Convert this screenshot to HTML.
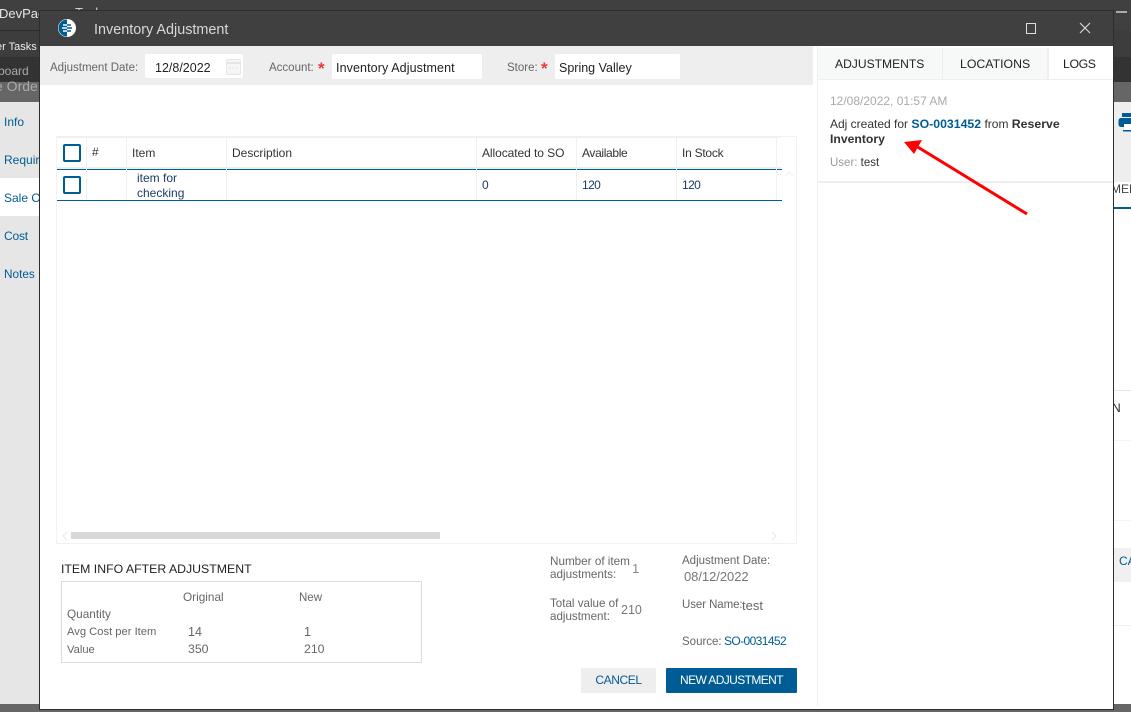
<!DOCTYPE html>
<html><head><meta charset="utf-8"><style>
html,body{margin:0;padding:0;width:1131px;height:712px;overflow:hidden;background:#fff}
body{position:relative;font-family:"Liberation Sans",sans-serif;font-size:12px;color:#444}
.r{position:absolute}
.t{position:absolute;white-space:nowrap;line-height:15px}
.lb{color:#666}
.dk{color:#222}
.nv{color:#1c3c66}
.bl{color:#005c94}
.cb{position:absolute;width:14px;height:14px;border:2px solid #005c94;border-radius:2px;background:#fff}
.st{font-weight:bold;font-size:17px;color:#e8383d}
</style></head><body>
<div class="r" style="left:0;top:0;width:1131px;height:30px;background:#404040"></div>
<div class="r" style="left:0;top:30px;width:1131px;height:27px;background:#3d3d3d"></div>
<div class="r" style="left:0;top:30px;width:40px;height:1px;background:#2c2c2c"></div>
<div class="r" style="left:0;top:57px;width:1131px;height:25px;background:#333"></div>
<div class="r" style="left:0;top:82px;width:1131px;height:20px;background:#666"></div>
<div class="r" style="left:0;top:102px;width:40px;height:602px;background:#e6e6e6"></div>
<div class="r" style="left:0;top:178px;width:40px;height:38px;background:#fff"></div>
<div class="r" style="left:0;top:704px;width:1131px;height:8px;background:#666"></div>
<div class="r" style="left:1113px;top:102px;width:18px;height:80px;background:#eee"></div>
<div class="r" style="left:1113px;top:182px;width:18px;height:522px;background:#fff"></div>
<div class="r" style="left:1113px;top:207px;width:18px;height:2px;background:#005c94"></div>
<div class="r" style="left:1113px;top:390px;width:18px;height:1px;background:#e8e8e8"></div>
<div class="r" style="left:1113px;top:548px;width:18px;height:34px;background:#f0f0f0"></div>
<div class="r" style="left:1113px;top:440px;width:18px;height:1px;background:#f4f4f4"></div>
<div class="r" style="left:1113px;top:520px;width:18px;height:1px;background:#f4f4f4"></div>
<div class="r" style="left:1113px;top:625px;width:18px;height:1px;background:#eee"></div>
<div class="r" style="left:1116px;top:11px;width:11px;height:2px;background:#aaa"></div>
<svg class="r" style="left:1118px;top:112px" width="13" height="20" viewBox="0 0 13 20"><path d="M4 1h9v4H4z" fill="#005c94"/><path d="M3 6h10v6H6v3H3a2.500 2.500 0 0 1-2.500-2.500v-4A2.500 2.500 0 0 1 3 6z" fill="#005c94"/><path d="M6 12h7v6H6z" fill="#fff"/><path d="M5 18h8v1.500H5z" fill="#005c94"/></svg>
<div class="t" style="left:-1px;top:6px;font-size:13px;color:#e6e6e6">DevPac</div>
<div class="t" style="left:75px;top:5px;font-size:13px;color:#d0d0d0;height:5px;overflow:hidden">Tasks</div>
<div class="t" style="left:-4px;top:40px;font-size:11px;color:#eee">er Tasks</div>
<div class="t" style="left:-2px;top:64px;color:#aaa">board</div>
<div class="t" style="left:-5px;top:79px;font-size:14px;color:#aaa">e Orde</div>
<div class="t bl" style="left:4px;top:115px">Info</div>
<div class="t bl" style="left:4px;top:153px;width:35px;overflow:hidden">Requir</div>
<div class="t bl" style="left:4px;top:191px;width:35px;overflow:hidden">Sale Or</div>
<div class="t bl" style="left:4px;top:229px;letter-spacing:-.2px">Cost</div>
<div class="t bl" style="left:4px;top:267px;font-size:11.800px">Notes</div>
<div class="t" style="left:1111px;top:182px;color:#444">MER</div>
<div class="t" style="left:1112px;top:401px;color:#222">N</div>
<div class="t bl" style="left:1119px;top:554px">CA</div>

<!-- modal -->
<div class="r" style="left:39px;top:10px;width:1075px;height:700px;background:#fff;border:1px solid #2e2e2e;box-sizing:border-box"></div>
<div class="r" style="left:40px;top:11px;width:1073px;height:35px;background:#404040"></div>
<svg class="r" style="left:57px;top:18px" width="20" height="20" viewBox="0 0 20 20"><circle cx="10" cy="10" r="9" fill="#fff"/><path d="M10 1.500a8.500 8.500 0 0 0 0 17z" fill="#005c94"/><path d="M10 7h4M10 10h5M10 13h4" stroke="#005c94" stroke-width="1.500"/><path d="M6 7h4M5 10h5M6 13h4" stroke="#fff" stroke-width="1.500"/></svg>
<div class="t" style="left:94px;top:21px;font-size:14.400px;color:#d8d8d8;line-height:18px">Inventory Adjustment</div>
<div class="r" style="left:1026px;top:23px;width:8px;height:9px;border:1px solid #ddd"></div>
<svg class="r" style="left:1079px;top:22px" width="12" height="12" viewBox="0 0 12 12"><path d="M1 1l10 10M11 1L1 11" stroke="#ddd" stroke-width="1.100" fill="none"/></svg>

<!-- filter bar -->
<div class="r" style="left:40px;top:46px;width:773px;height:39px;background:#eee"></div>
<div class="t lb" style="left:50px;top:61px;font-size:11.500px">Adjustment Date:</div>
<div class="r" style="left:145px;top:54px;width:98px;height:24px;background:#fff;border-radius:2px"></div>
<div class="t dk" style="left:155px;top:61px;font-size:12.500px">12/8/2022</div>
<svg class="r" style="left:225px;top:57px" width="17" height="19" viewBox="0 0 17 19"><rect x="1.500" y="2.500" width="14" height="15" rx="1.500" fill="#f6f6f6" stroke="#e6e6e6"/><path d="M2 6h13" stroke="#e6e6e6" stroke-width="2"/><path d="M4 11h9" stroke="#e0e0e0" stroke-dasharray="2 1.500"/></svg>
<div class="t lb" style="left:269px;top:61px;font-size:11.500px">Account:</div>
<div class="t st" style="left:318px;top:61px">*</div>
<div class="r" style="left:332px;top:54px;width:150px;height:25px;background:#fff;border-radius:2px"></div>
<div class="t dk" style="left:336px;top:61px;font-size:12.500px;letter-spacing:.1px">Inventory Adjustment</div>
<div class="t lb" style="left:507px;top:61px;font-size:11.500px">Store:</div>
<div class="t st" style="left:541px;top:61px">*</div>
<div class="r" style="left:555px;top:54px;width:125px;height:25px;background:#fff;border-radius:2px"></div>
<div class="t dk" style="left:559px;top:61px;font-size:12.500px">Spring Valley</div>

<!-- grid -->
<div class="r" style="left:56px;top:136px;width:741px;height:408px;border:1px solid #f2f2f2;box-sizing:border-box"></div>
<div class="r" style="left:57px;top:136px;width:724px;height:2px;background:#f0f0f0"></div>
<div class="r" style="left:57px;top:167px;width:724px;height:2px;background:#eee"></div>
<div class="r" style="left:57px;top:169px;width:725px;height:1px;background:#005c94"></div>
<div class="r" style="left:57px;top:200px;width:725px;height:1px;background:#005c94"></div>
<div class="r" style="left:86px;top:137px;width:1px;height:63px;background:#eef0f2"></div>
<div class="r" style="left:126px;top:137px;width:1px;height:63px;background:#eef0f2"></div>
<div class="r" style="left:226px;top:137px;width:1px;height:63px;background:#eef0f2"></div>
<div class="r" style="left:476px;top:137px;width:1px;height:63px;background:#eef0f2"></div>
<div class="r" style="left:576px;top:137px;width:1px;height:63px;background:#eef0f2"></div>
<div class="r" style="left:676px;top:137px;width:1px;height:63px;background:#eef0f2"></div>
<div class="r" style="left:776px;top:137px;width:1px;height:63px;background:#eef0f2"></div>
<div class="cb" style="left:63px;top:144px"></div>
<div class="cb" style="left:63px;top:176px"></div>
<div class="t" style="left:92px;top:145px;color:#333">#</div>
<div class="t" style="left:132px;top:146px;color:#333">Item</div>
<div class="t" style="left:232px;top:146px;color:#333">Description</div>
<div class="t" style="left:482px;top:146px;color:#333;letter-spacing:-.07px">Allocated to SO</div>
<div class="t" style="left:582px;top:146px;color:#333;letter-spacing:-.35px">Available</div>
<div class="t" style="left:682px;top:146px;color:#333;letter-spacing:-.25px">In Stock</div>
<div class="t nv" style="left:137px;top:171px">item for</div>
<div class="t nv" style="left:137px;top:186px">checking</div>
<div class="t nv" style="left:482px;top:178px">0</div>
<div class="t nv" style="left:582px;top:178px;letter-spacing:-.6px">120</div>
<div class="t nv" style="left:682px;top:178px;letter-spacing:-.6px">120</div>
<svg class="r" style="left:784px;top:171px" width="10" height="6" viewBox="0 0 10 6"><path d="M1 5l4-4 4 4" stroke="#f0f0f0" fill="none"/></svg>
<svg class="r" style="left:62px;top:531px" width="6" height="10" viewBox="0 0 6 10"><path d="M5 1L1 5l4 4" stroke="#e8e8e8" fill="none"/></svg>
<svg class="r" style="left:771px;top:531px" width="6" height="10" viewBox="0 0 6 10"><path d="M1 1l4 4-4 4" stroke="#e8e8e8" fill="none"/></svg>
<div class="r" style="left:71px;top:532px;width:369px;height:7px;background:#d8d8d8"></div>

<!-- item info -->
<div class="t" style="left:61px;top:562px;font-size:12.300px;color:#222">ITEM INFO AFTER ADJUSTMENT</div>
<div class="r" style="left:61px;top:581px;width:361px;height:82px;border:1px solid #d5dce2;box-sizing:border-box"></div>
<div class="t lb" style="left:183px;top:590px;font-size:11.800px">Original</div>
<div class="t lb" style="left:299px;top:591px;font-size:11.500px">New</div>
<div class="t lb" style="left:67px;top:607px;font-size:11.800px">Quantity</div>
<div class="t lb" style="left:67px;top:625px;font-size:11.200px">Avg Cost per Item</div>
<div class="t lb" style="left:67px;top:643px;font-size:11.200px">Value</div>
<div class="t lb" style="left:188px;top:625px;font-size:12.500px">14</div>
<div class="t lb" style="left:304px;top:625px;font-size:12.500px">1</div>
<div class="t lb" style="left:188px;top:642px;font-size:12.300px">350</div>
<div class="t lb" style="left:304px;top:642px;font-size:12.300px">210</div>

<!-- summary -->
<div class="t lb" style="left:550px;top:555px;font-size:11.700px;line-height:13px">Number of item<br>adjustments:</div>
<div class="t" style="left:632px;top:561px;color:#888;font-size:13px">1</div>
<div class="t lb" style="left:550px;top:597px;font-size:11.600px;line-height:13px">Total value of<br>adjustment:</div>
<div class="t" style="left:621px;top:603px;color:#777;font-size:12.500px">210</div>
<div class="t lb" style="left:682px;top:554px;font-size:11.500px">Adjustment Date:</div>
<div class="t" style="left:684px;top:569px;color:#777;font-size:13px;letter-spacing:-.05px">08/12/2022</div>
<div class="t lb" style="left:682px;top:598px;font-size:11.500px;letter-spacing:-.08px">User Name:</div>
<div class="t" style="left:742px;top:598px;color:#666;font-size:13px">test</div>
<div class="t lb" style="left:682px;top:635px;font-size:11.500px">Source:</div>
<div class="t bl" style="left:724px;top:634px;letter-spacing:-.6px">SO-0031452</div>

<div class="r" style="left:581px;top:668px;width:75px;height:25px;background:#eee"></div>
<div class="t bl" style="left:581px;top:673px;width:75px;text-align:center;letter-spacing:-.4px">CANCEL</div>
<div class="r" style="left:666px;top:668px;width:131px;height:25px;background:#005c94;border-radius:1px"></div>
<div class="t" style="left:666px;top:673px;width:131px;text-align:center;color:#fff;letter-spacing:-.6px">NEW ADJUSTMENT</div>

<!-- right panel -->
<div class="r" style="left:817px;top:46px;width:1px;height:660px;background:#efefef"></div>
<div class="r" style="left:818px;top:48px;width:124px;height:31px;background:#f7f8f8"></div>
<div class="r" style="left:943px;top:48px;width:104px;height:31px;background:#f7f8f8"></div>
<div class="r" style="left:818px;top:79px;width:295px;height:1px;background:#eee"></div>
<div class="r" style="left:942px;top:48px;width:1px;height:31px;background:#eee"></div>
<div class="r" style="left:1047px;top:48px;width:2px;height:31px;background:#eee"></div>
<div class="t" style="left:835px;top:57px;font-size:12.100px;color:#222">ADJUSTMENTS</div>
<div class="t" style="left:960px;top:57px;font-size:12.300px;color:#222">LOCATIONS</div>
<div class="t" style="left:1063px;top:57px;font-size:12.300px;color:#222;letter-spacing:-.4px">LOGS</div>
<div class="t" style="left:830px;top:94px;color:#aaa">12/08/2022, 01:57 AM</div>
<div class="t" style="left:830px;top:117px;color:#333">Adj created for <b class="bl" style="font-size:12.300px">SO-0031452</b> from <b style="font-size:12.300px">Reserve</b></div>
<div class="t" style="left:830px;top:132px;color:#333"><b style="font-size:12.200px">Inventory</b></div>
<div class="t" style="left:830px;top:156px;font-size:11.500px;color:#999">User: <span style="color:#333">test</span></div>
<div class="r" style="left:818px;top:181px;width:295px;height:2px;background:#eee"></div>
<svg class="r" style="left:900px;top:135px" width="135" height="90" viewBox="0 0 135 90"><path d="M127 79L16 11" stroke="#f00" stroke-width="3" fill="none"/><path d="M4 7L22 5 14 19z" fill="#f00"/></svg>
</body></html>
